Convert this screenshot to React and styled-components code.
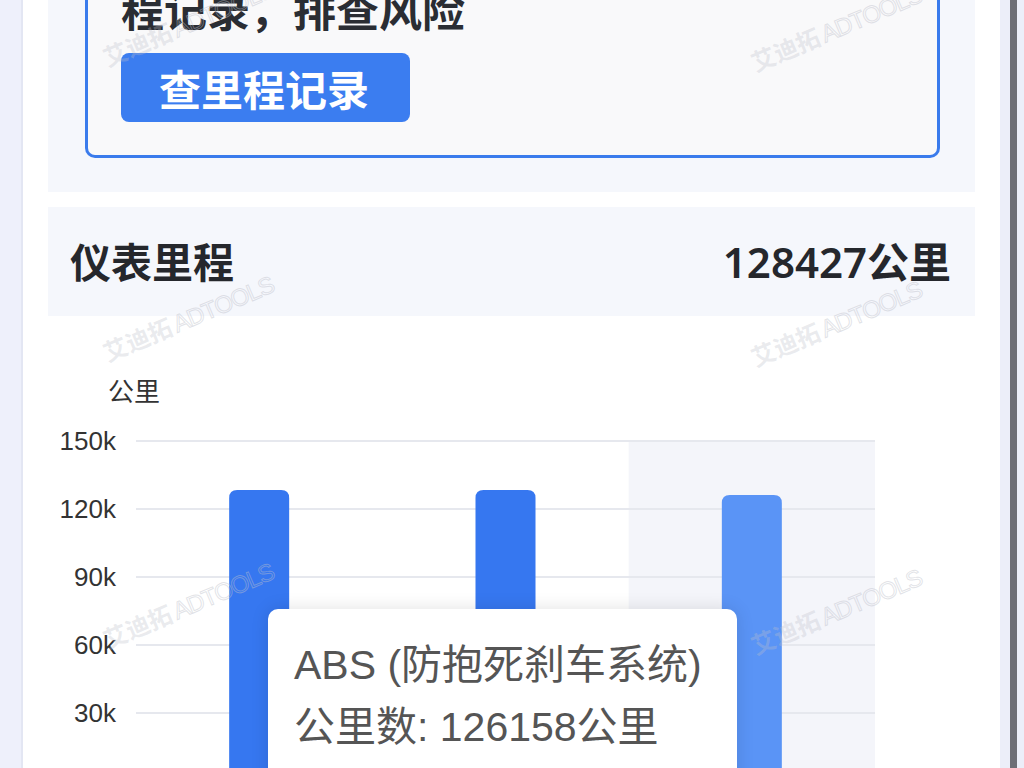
import React from "react";
import styled, { createGlobalStyle } from "styled-components";

const GlobalStyle = createGlobalStyle`
  html, body {
    margin: 0;
    padding: 0;
    background: #ffffff;
    overflow: hidden;
  }
  body {
    font-family: "Noto Sans", "Noto Sans CJK SC", sans-serif;
  }
`;

const Page = styled.div`
  position: relative;
  display: flex;
  width: 1024px;
  height: 768px;
  overflow: hidden;
  background: #ffffff;
`;

const LeftRail = styled.div`
  width: 21px;
  flex-shrink: 0;
  background: #eef0fb;
  border-right: 2px solid #e3e6f3;
`;

const Main = styled.div`
  flex: 1;
  display: flex;
  flex-direction: column;
  padding: 0 25px;
  min-width: 0;
  min-height: 0;
`;

const Gutter = styled.div`
  width: 24px;
  flex-shrink: 0;
  display: flex;
  background: #eceef9;
  padding: 0 7px 0 10px;
  box-sizing: border-box;
`;

const Thumb = styled.div`
  flex: 1;
  background: #6d6e76;
`;

const NoticeCard = styled.section`
  flex-shrink: 0;
  background: #f5f7fc;
  padding: 0 35px 34px 37px;
`;

const NoticeBox = styled.div`
  background: #f9f9fa;
  border: 3px solid #3a7bec;
  border-top: none;
  border-radius: 0 0 10px 10px;
  padding: 0 33px 33px 33px;
`;

const NoticeText = styled.p`
  margin: -17px 0 0;
  font-family: "Noto Sans CJK SC", sans-serif;
  font-weight: 700;
  font-size: 43px;
  line-height: 50px;
  color: #2a2d33;
`;

const ActionButton = styled.button`
  display: block;
  margin-top: 20px;
  width: 289px;
  height: 69px;
  border: none;
  border-radius: 8px;
  background: #3b7df0;
  color: #ffffff;
  font-family: "Noto Sans CJK SC", sans-serif;
  font-weight: 700;
  font-size: 42px;
  line-height: 64px;
  text-align: left;
  padding: 0 0 0 38px;
  cursor: pointer;
`;

const SummaryRow = styled.section`
  flex-shrink: 0;
  margin-top: 15px;
  height: 109px;
  background: #f5f7fc;
  display: flex;
  align-items: center;
  justify-content: space-between;
  padding: 0 24px 4px 22px;
  box-sizing: border-box;
`;

const SummaryLabel = styled.h2`
  margin: 0;
  font-family: "Noto Sans CJK SC", sans-serif;
  font-weight: 700;
  font-size: 41px;
  color: #25272c;
`;

const SummaryValue = styled.span`
  font-family: "Noto Sans", "Noto Sans CJK SC", sans-serif;
  font-weight: 600;
  font-size: 42px;
  color: #25272c;
`;

const ChartArea = styled.div`
  position: relative;
  flex-shrink: 0;
  height: 452px;
`;

const Tooltip = styled.div`
  position: absolute;
  left: 220px;
  top: 293px;
  width: 469px;
  height: 220px;
  box-sizing: border-box;
  background: #ffffff;
  border-radius: 10px;
  box-shadow: 0 0 18px rgba(0, 0, 0, 0.12);
  padding: 25px 26px;
  font-family: "Liberation Sans", "Noto Sans CJK SC", sans-serif;
  font-size: 41px;
  line-height: 62px;
  color: #555555;
`;

const TooltipLine = styled.div`
  white-space: nowrap;
`;

const Watermark = styled.div`
  position: absolute;
  left: ${(props) => props.x}px;
  top: ${(props) => props.y}px;
  transform: rotate(-23deg);
  transform-origin: left center;
  white-space: nowrap;
  pointer-events: none;
  font-size: 24px;
  color: rgba(190, 192, 202, 0.32);
  font-family: "Noto Sans CJK SC", sans-serif;
`;

const MarkCn = styled.span`
  font-weight: 700;
  margin-right: 3px;
`;

const MarkEn = styled.span`
  font-family: "Liberation Sans", sans-serif;
  font-weight: 400;
  letter-spacing: -1px;
  color: transparent;
  -webkit-text-stroke: 1px rgba(190, 192, 202, 0.45);
`;

const bars = [
  { name: "发动机", value: 128427, color: "#3677f0" },
  { name: "变速箱", value: 128427, color: "#3677f0" },
  { name: "ABS (防抱死刹车系统)", value: 126158, color: "#5a94f6" },
];

const ticks = [150000, 120000, 90000, 60000, 30000];

const plotLeft = 88;
const plotRight = 827;
const zeroY = 465;
const yOf = (v) => zeroY - (v * 68) / 30000;

function barPath(x, top, w, bottom, r) {
  return `M${x},${bottom} L${x},${top + r} Q${x},${top} ${x + r},${top} L${x + w - r},${top} Q${x + w},${top} ${x + w},${top + r} L${x + w},${bottom} Z`;
}

function MileageChart() {
  const band = (plotRight - plotLeft) / bars.length;
  const active = 2;

  return (
    <svg width="927" height="452" viewBox="0 0 927 452">
      <text x="60" y="76" dy="0.35em" fontSize="26" fill="#333" fontFamily="Noto Sans CJK SC, sans-serif">
        公里
      </text>
      <rect x={plotLeft + band * active} y={yOf(150000)} width={band} height={452} fill="#f4f5fa" />
      {ticks.map((t) => (
        <g key={t}>
          <line x1={plotLeft} x2={plotRight} y1={yOf(t)} y2={yOf(t)} stroke="#e6e8ee" strokeWidth="2" />
          <text
            x="68"
            y={yOf(t)}
            dy="0.36em"
            textAnchor="end"
            fontSize="26"
            fill="#333"
            fontFamily="Liberation Sans, sans-serif"
          >
            {t / 1000}k
          </text>
        </g>
      ))}
      {bars.map((b, i) => {
        const x = plotLeft + band * i + band / 2 - 30;
        return <path key={b.name} d={barPath(x, yOf(b.value), 60, 470, 8)} fill={b.color} />;
      })}
    </svg>
  );
}

export default function App() {
  const marks = [
    { x: 104, y: 40 },
    { x: 752, y: 45 },
    { x: 104, y: 335 },
    { x: 752, y: 340 },
    { x: 104, y: 622 },
    { x: 752, y: 628 },
  ];

  return (
    <>
      <GlobalStyle />
      <Page>
        <LeftRail />
        <Main>
          <NoticeCard>
            <NoticeBox>
              <NoticeText>程记录，排查风险</NoticeText>
              <ActionButton>查里程记录</ActionButton>
            </NoticeBox>
          </NoticeCard>
          <SummaryRow>
            <SummaryLabel>仪表里程</SummaryLabel>
            <SummaryValue>128427公里</SummaryValue>
          </SummaryRow>
          <ChartArea>
            <MileageChart />
            <Tooltip>
              <TooltipLine>ABS (防抱死刹车系统)</TooltipLine>
              <TooltipLine>公里数: 126158公里</TooltipLine>
            </Tooltip>
          </ChartArea>
        </Main>
        <Gutter>
          <Thumb />
        </Gutter>
        {marks.map((m, i) => (
          <Watermark key={i} x={m.x} y={m.y}>
            <MarkCn>艾迪拓</MarkCn>
            <MarkEn>ADTOOLS</MarkEn>
          </Watermark>
        ))}
      </Page>
    </>
  );
}
